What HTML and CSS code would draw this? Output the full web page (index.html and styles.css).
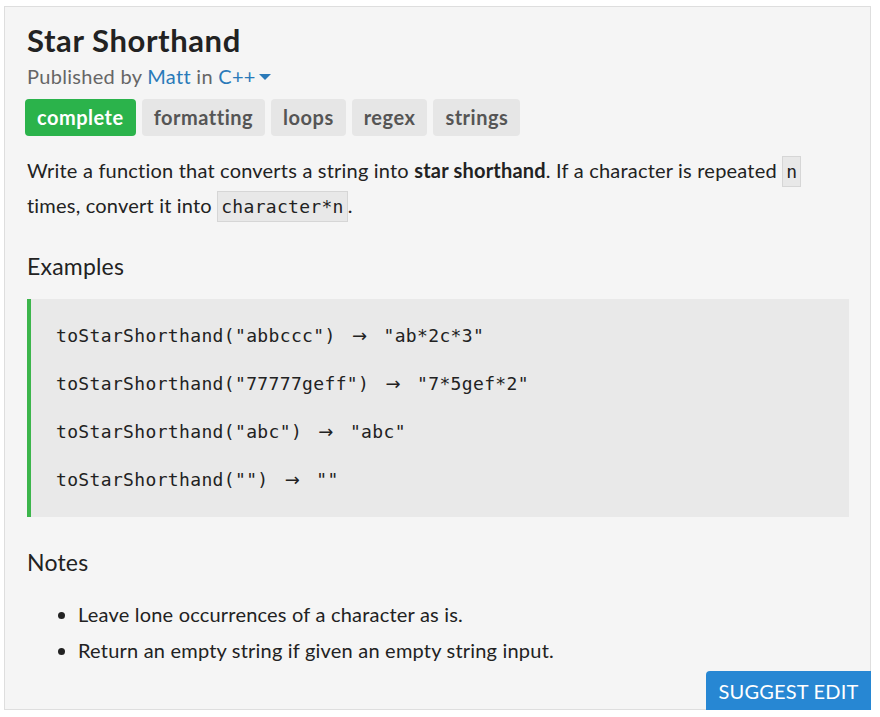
FILE: index.html
```html
<!DOCTYPE html>
<html>
<head>
<meta charset="utf-8">
<link rel="stylesheet" href="styles.css">
</head>
<body>
<div class="card">
  <h1 class="title">Star Shorthand</h1>
  <div class="meta">Published by <a class="link">Matt</a> in <a class="link">C++</a> <span class="caret"></span></div>
  <div class="tags">
    <span class="tag tag-done">complete</span>
    <span class="tag">formatting</span>
    <span class="tag">loops</span>
    <span class="tag">regex</span>
    <span class="tag">strings</span>
  </div>
  <p class="desc">Write a function that converts a string into <strong>star shorthand</strong>. If a character is repeated <code class="ic">n</code> times, convert it into <code class="ic">character*n</code>.</p>
  <h2 class="section">Examples</h2>
  <div class="examples">
    <div class="ex">toStarShorthand("abbccc") <span class="arr">→</span> "ab*2c*3"</div>
    <div class="ex">toStarShorthand("77777geff") <span class="arr">→</span> "7*5gef*2"</div>
    <div class="ex">toStarShorthand("abc") <span class="arr">→</span> "abc"</div>
    <div class="ex">toStarShorthand("") <span class="arr">→</span> ""</div>
  </div>
  <h2 class="section notes-title">Notes</h2>
  <ul class="notes">
    <li>Leave lone occurrences of a character as is.</li>
    <li>Return an empty string if given an empty string input.</li>
  </ul>
  <button class="suggest">SUGGEST EDIT</button>
</div>
</body>
</html>
```
FILE: styles.css
```css
html, body {
  margin: 0;
  padding: 0;
  background: #ffffff;
}
body {
  font-family: Lato, "Open Sans", sans-serif;
  color: #222;
}
.card {
  position: relative;
  box-sizing: border-box;
  margin: 6px 0 0 4px;
  width: 867px;
  height: 704px;
  background: #f5f5f5;
  border: 1px solid #dedede;
  padding: 15px 21px 0 22px;
}
.title {
  margin: 0;
  font-size: 31px;
  letter-spacing: 0.6px;
  line-height: 36px;
  font-weight: 700;
  color: #222;
}
.meta {
  margin-top: 6px;
  font-size: 20px;
  letter-spacing: 0.3px;
  line-height: 24px;
  color: #666;
}
.link {
  color: #2a7ab9;
}
.caret {
  display: inline-block;
  width: 0;
  height: 0;
  border-left: 6px solid transparent;
  border-right: 6px solid transparent;
  border-top: 6px solid #2a7ab9;
  vertical-align: middle;
  margin-left: -2px;
  position: relative;
  top: -2px;
}
.tags {
  margin-top: 11px;
  display: flex;
  gap: 6px;
  margin-left: -2px;
}
.tag {
  display: inline-block;
  height: 37px;
  line-height: 37px;
  padding: 0 12px;
  border-radius: 4px;
  background: #e6e6e6;
  color: #555;
  font-size: 20px;
  letter-spacing: 0.5px;
  font-weight: 700;
}
.tag-done {
  background: #2bb34b;
  color: #fff;
}
.desc {
  margin: 17px 0 0 0;
  font-size: 20px;
  letter-spacing: 0.2px;
  line-height: 35px;
  color: #222;
}
.desc strong {
  font-weight: 700;
}
.ic {
  font-family: "DejaVu Sans Mono", monospace;
  font-size: 18px;
  line-height: 20px;
  letter-spacing: 0.3px;
  background: #e8e8e8;
  border: 1px solid #d6d6d6;
  padding: 4px 3px;
  color: #222;
}
.section {
  margin: 28px 0 0 0;
  font-size: 23px;
  letter-spacing: 0.2px;
  line-height: 30px;
  font-weight: 400;
  color: #222;
}
.examples {
  margin-top: 18px;
  background: #e9e9e9;
  border-left: 4px solid #3cb54b;
  padding: 25px 0 25px 25px;
  display: flex;
  flex-direction: column;
  gap: 24px;
}
.ex {
  font-family: "DejaVu Sans Mono", monospace;
  font-size: 18px;
  letter-spacing: 0.35px;
  line-height: 24px;
  color: #222;
}
.arr {
  font-family: "DejaVu Sans", sans-serif;
  margin: 0 5px;
}
.notes-title {
  margin-top: 30px;
}
.notes {
  margin: 19px 0 0 0;
  padding-left: 51px;
  font-size: 20px;
  letter-spacing: 0.2px;
  line-height: 36px;
}
.suggest {
  position: absolute;
  right: -1px;
  bottom: -1px;
  width: 165px;
  height: 39px;
  border: 0;
  border-radius: 4px 0 0 0;
  background: #2787d3;
  color: #fff;
  font-family: Lato, sans-serif;
  font-size: 20px;
  letter-spacing: 0.2px;
  padding: 0;
}
```
